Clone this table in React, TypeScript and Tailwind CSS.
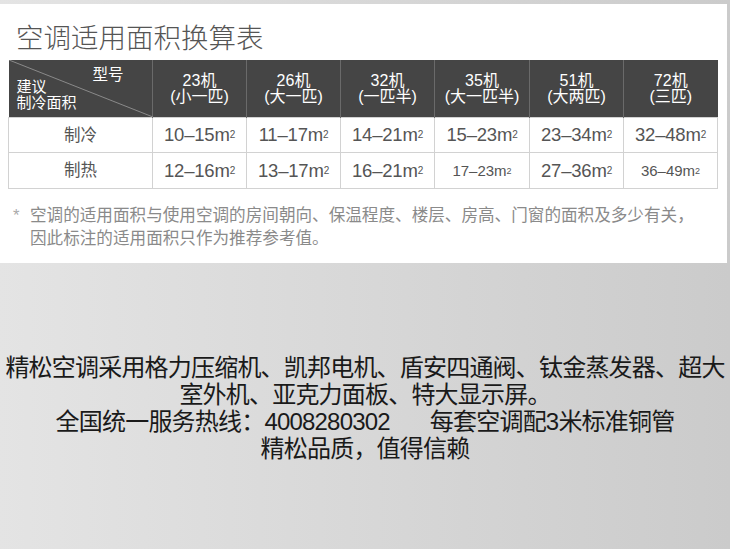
import React from "react";

const cols = [
  { w: "w-[94px]", model: "23机", size: "(小一匹)", cool: "10–15", heat: "12–16", heatSmall: false },
  { w: "w-[94px]", model: "26机", size: "(大一匹)", cool: "11–17", heat: "13–17", heatSmall: false },
  { w: "w-[94px]", model: "32机", size: "(一匹半)", cool: "14–21", heat: "16–21", heatSmall: false },
  { w: "w-[95px]", model: "35机", size: "(大一匹半)", cool: "15–23", heat: "17–23", heatSmall: true },
  { w: "w-[94px]", model: "51机", size: "(大两匹)", cool: "23–34", heat: "27–36", heatSmall: false },
  { w: "w-[94px]", model: "72机", size: "(三匹)", cool: "32–48", heat: "36–49", heatSmall: true },
];

const Area: React.FC<{ v: string; small?: boolean }> = ({ v, small }) => (
  <span className={small ? "text-[15px]" : "text-[18.5px] tracking-[-0.2px]"}>
    {v}m<sup className={small ? "text-[9px] relative -top-[2px]" : "text-[10px] relative -top-[3px]"}>2</sup>
  </span>
);

export default function App() {
  return (
    <div
      className="w-[730px] h-[549px] overflow-hidden bg-gradient-to-r from-[#e4e4e4] to-[#cbcbcb] pt-[4px]"
      style={{ fontFamily: '"Liberation Sans", "Noto Sans CJK SC", sans-serif' }}
    >
      <div className="w-[727px] h-[259px] bg-white pt-[18px]">
        <h1 className="pl-[16px] text-[27.5px] leading-[34px] font-light text-[#555]">
          空调适用面积换算表
        </h1>

        <table className="ml-[8px] mt-[4px] border-collapse">
          <thead>
            <tr className="bg-[#454545] text-white h-[57px]">
              <th className="relative w-[144px] p-0 font-normal border-r border-[#6a6a6a]">
                <svg className="absolute inset-0" width="144" height="57">
                  <line x1="0" y1="0" x2="144" y2="57" stroke="#8a8a8a" strokeWidth="1" />
                </svg>
                <div className="relative h-[57px] text-left">
                  <div className="absolute left-[84px] top-[7px] text-[15.5px] leading-[16px]">型号</div>
                  <div className="absolute left-[8px] top-[19px] text-[15px] leading-[16px]">
                    建议
                    <br />
                    制冷面积
                  </div>
                </div>
              </th>
              {cols.map((c, i) => (
                <th
                  key={c.model}
                  className={`${c.w} p-0 font-normal text-[16px] leading-[16px] ${
                    i < cols.length - 1 ? "border-r border-[#6a6a6a]" : ""
                  }`}
                >
                  <div>{c.model}</div>
                  <div>{c.size}</div>
                </th>
              ))}
            </tr>
          </thead>
          <tbody className="text-[#555]">
            <tr className="h-[35px]">
              <td className="border border-[#d2d2d2] text-center text-[16.5px]">制冷</td>
              {cols.map((c) => (
                <td key={c.model} className="border border-[#d2d2d2] text-center">
                  <Area v={c.cool} />
                </td>
              ))}
            </tr>
            <tr className="h-[36px]">
              <td className="border border-[#d2d2d2] text-center text-[16.5px]">制热</td>
              {cols.map((c) => (
                <td key={c.model} className="border border-[#d2d2d2] text-center">
                  <Area v={c.heat} small={c.heatSmall} />
                </td>
              ))}
            </tr>
          </tbody>
        </table>

        <div className="mt-[15px] flex text-[16.6px] leading-[23px] text-[#8a8a8a]">
          <span className="w-[30px] pl-[13px] text-[#aaa]">*</span>
          <p>
            空调的适用面积与使用空调的房间朝向、保温程度、楼层、房高、门窗的面积及多少有关，
            <br />
            因此标注的适用面积只作为推荐参考值。
          </p>
        </div>
      </div>

      <div className="mt-[91px] flex flex-col items-center text-[24px] leading-[27px] tracking-[-0.8px] text-[#1a1a1a]">
        <p>精松空调采用格力压缩机、凯邦电机、盾安四通阀、钛金蒸发器、超大</p>
        <p>室外机、亚克力面板、特大显示屏。</p>
        <p>
          全国统一服务热线：4008280302
          <span className="ml-[40px]">每套空调配3米标准铜管</span>
        </p>
        <p>精松品质，值得信赖</p>
      </div>
    </div>
  );
}
